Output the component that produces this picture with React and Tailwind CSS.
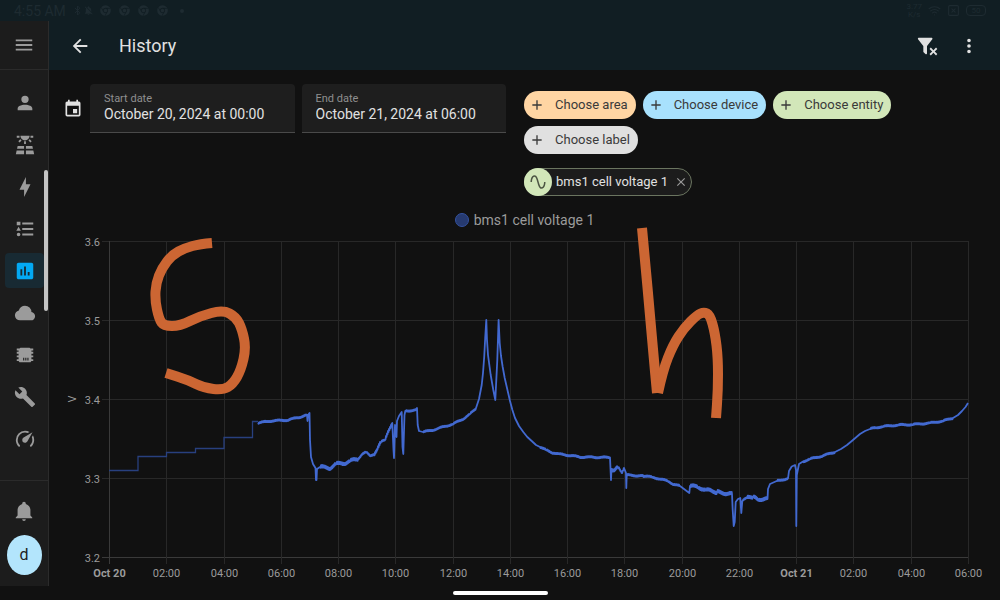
import { Bluetooth, Wifi, SquareX } from "lucide-react";
import { FaChrome } from "react-icons/fa";
import { MdNotificationsOff } from "react-icons/md";

const icons = {
  menu: "M3,6H21V8H3V6M3,11H21V13H3V11M3,16H21V18H3V16Z",
  back: "M20,11V13H8L13.5,18.5L12.08,19.92L4.16,12L12.08,4.08L13.5,5.5L8,11H20Z",
  filterRemove:
    "M14.76,20.83L17.6,18L14.76,15.17L16.17,13.76L19,16.57L21.83,13.76L23.24,15.17L20.43,18L23.24,20.83L21.83,22.24L19,19.4L16.17,22.24L14.76,20.83M12,12V19.88C12.04,20.18 11.94,20.5 11.71,20.71C11.32,21.1 10.69,21.1 10.3,20.71L8.29,18.7C8.06,18.47 7.96,18.16 8,17.87V12H7.97L2.21,4.62C1.87,4.19 1.95,3.56 2.38,3.22C2.57,3.08 2.78,3 3,3H17C17.22,3 17.43,3.08 17.62,3.22C18.05,3.56 18.13,4.19 17.79,4.62L12.03,12H12Z",
  dots: "M12,16A2,2 0 0,1 12,20A2,2 0 0,1 12,16M12,10A2,2 0 0,1 12,14A2,2 0 0,1 12,10M12,4A2,2 0 0,1 12,8A2,2 0 0,1 12,4Z",
  account:
    "M12,4A4,4 0 0,1 16,8A4,4 0 0,1 12,12A4,4 0 0,1 8,8A4,4 0 0,1 12,4M12,14C16.42,14 20,15.79 20,18V20H4V18C4,15.79 7.58,14 12,14Z",
  solar:
    "M3.33 16H11V13H4L3.33 16M13 16H20.67L20 13H13V16M21.11 18H13V22H22L21.11 18M2 22H11V18H2.89L2 22M11 8H13V11H11V8M15.76 7.21L17.18 5.79L19.3 7.91L17.89 9.33L15.76 7.21M4.71 7.91L6.83 5.79L8.24 7.21L6.12 9.33L4.71 7.91M3 2H6V4H3V2M18 2H21V4H18V2M12 7C14.76 7 17 4.76 17 2H7C7 4.76 9.24 7 12 7Z",
  flash: "M11 15H6L13 1V9H18L11 23V15Z",
  logbook:
    "M5,9.5L7.5,14H2.5L5,9.5M3,4H7V8H3V4M5,20A2,2 0 0,0 7,18A2,2 0 0,0 5,16A2,2 0 0,0 3,18A2,2 0 0,0 5,20M9,5V7H21V5H9M9,19H21V17H9V19M9,13H21V11H9V13Z",
  chart:
    "M9 17H7V10H9V17M13 17H11V7H13V17M17 17H15V13H17V17M19 3H5C3.9 3 3 3.9 3 5V19C3 20.1 3.9 21 5 21H19C20.1 21 21 20.1 21 19V5C21 3.9 20.1 3 19 3Z",
  cloud:
    "M6.5 20Q4.22 20 2.61 18.43Q1 16.85 1 14.58Q1 12.63 2.17 11.1Q3.35 9.57 5.25 9.15Q5.88 6.85 7.75 5.43Q9.63 4 12 4Q14.93 4 16.96 6.04Q19 8.07 19 11Q20.73 11.2 21.86 12.5Q23 13.78 23 15.5Q23 17.38 21.69 18.69Q20.38 20 18.5 20Z",
  chip: "M7 4H17L18 5H21V7H19V8.5H21V10.5H19V12.5H21V14.5H19V16.5H21V18.5H19L18 20H6L5 18.5H3V16.5H5V14.5H3V12.5H5V10.5H3V8.5H5V7H3V5H6L7 4M10 15V18H11.2V15H10M12.3 15V18H13.5V15H12.3M14.6 15V18H15.8V15H14.6Z",
  wrench:
    "M22.7,19L13.6,9.9C14.5,7.6 14,4.9 12.1,3C10.1,1 7.1,0.6 4.7,1.7L9,6L6,9L1.6,4.7C0.4,7.1 0.9,10.1 2.9,12.1C4.8,14 7.5,14.5 9.8,13.6L18.9,22.7C19.3,23.1 19.9,23.1 20.3,22.7L22.6,20.4C23.1,20 23.1,19.3 22.7,19Z",
  gauge:
    "M12,16A3,3 0 0,1 9,13C9,11.88 9.61,10.9 10.5,10.39L20.21,4.77L14.68,14.35C14.18,15.33 13.17,16 12,16M12,3C13.81,3 15.5,3.5 16.97,4.32L14.87,5.53C14,5.19 13,5 12,5A8,8 0 0,0 4,13C4,15.21 4.89,17.21 6.34,18.65C6.74,19.04 6.74,19.67 6.35,20.06C5.96,20.45 5.32,20.45 4.93,20.07C3.12,18.26 2,15.76 2,13A10,10 0 0,1 12,3M22,13C22,15.76 20.88,18.26 19.07,20.07C18.68,20.45 18.05,20.45 17.66,20.06C17.27,19.67 17.27,19.04 17.66,18.65C19.11,17.2 20,15.21 20,13C20,12 19.81,11 19.46,10.1L20.67,8C21.5,9.5 22,11.18 22,13Z",
  bell: "M21,19V20H3V19L5,17V11C5,7.9 7.03,5.17 10,4.29C10,4.19 10,4.1 10,4A2,2 0 0,1 12,2A2,2 0 0,1 14,4C14,4.1 14,4.19 14,4.29C16.97,5.17 19,7.9 19,11V17L21,19M14,21A2,2 0 0,1 12,23A2,2 0 0,1 10,21",
  calendar:
    "M19,19H5V8H19M16,1V3H8V1H6V3H5C3.89,3 3,3.89 3,5V19A2,2 0 0,0 5,21H19A2,2 0 0,0 21,19V5C21,3.89 20.1,3 19,3H18V1M17,12H12V17H17V12Z",
  plus: "M19,13H13V19H11V13H5V11H11V5H13V11H19V13Z",
  close:
    "M19,6.41L17.59,5L12,10.59L6.41,5L5,6.41L10.59,12L5,17.59L6.41,19L12,13.41L17.59,19L19,17.59L13.41,12L19,6.41Z",
  sine: "M16.5,21C13.5,21 12.31,16.76 11.05,12.28C10.14,9.04 9,5 7.5,5C4.11,5 4,11.93 4,12H2C2,11.63 2.06,3 7.5,3C10.5,3 11.71,7.25 12.97,11.74C13.83,14.8 15,19 16.5,19C19.94,19 20.03,12.07 20.03,12H22.03C22.03,12.37 21.97,21 16.5,21Z",
};

const Icon = ({ name, size = 22 }) => (
  <svg
    width={size}
    height={size}
    viewBox="0 0 24 24"
    fill="currentColor"
    fillRule="evenodd"
    className="shrink-0"
    aria-hidden="true"
  >
    <path d={icons[name]} />
  </svg>
);

const navItems = [
  { icon: "account", label: "Overview" },
  { icon: "solar", label: "Solar" },
  { icon: "flash", label: "Energy" },
  { icon: "logbook", label: "Logbook" },
  { icon: "chart", label: "History", active: true },
  { icon: "cloud", label: "Cloud" },
  { icon: "chip", label: "ESPHome" },
  { icon: "wrench", label: "Developer tools" },
  { icon: "gauge", label: "Speed" },
];

const StatusBar = () => (
  <div className="flex h-[21px] items-center justify-between bg-[#111e23] pl-3.5 pr-3.5 text-[#1e2b31]">
    <div className="flex items-center gap-1.5">
      <span className="text-sm leading-5">4:55 AM</span>
      <div className="flex items-center">
        <Bluetooth size={11} />
        <MdNotificationsOff size={11} />
      </div>
      <div className="flex items-center gap-2">
        <FaChrome size={11} />
        <FaChrome size={11} />
        <FaChrome size={11} />
        <FaChrome size={11} />
        <span className="ml-1 size-1 rounded-full bg-current" />
      </div>
    </div>
    <div className="flex items-center gap-1.5">
      <div className="text-center text-[8px] leading-[8px]">
        3.77
        <br />
        K/s
      </div>
      <Wifi size={13} />
      <SquareX size={13} />
      <span className="flex h-[11px] w-5 items-center justify-center rounded-sm border border-current text-[8px] leading-[8px]">
        50
      </span>
    </div>
  </div>
);

const Sidebar = () => (
  <aside className="relative flex w-[49px] shrink-0 flex-col border-r border-[#2b2b2b] bg-[#1c1c1c] text-[#9b9b9b]">
    <button
      aria-label="Menu"
      className="flex h-[49px] items-center justify-center border-b border-[#2b2b2b]"
    >
      <Icon name="menu" />
    </button>
    <nav className="flex flex-col gap-[7px] pt-[15px] pl-[5px] pr-1">
      {navItems.map((item) => (
        <a
          key={item.icon}
          href="#"
          aria-label={item.label}
          className={`flex h-[35px] items-center justify-center rounded ${
            item.active ? "bg-[#182a33] text-[#03a9f4]" : ""
          }`}
        >
          <Icon name={item.icon} />
        </a>
      ))}
    </nav>
    <div className="mt-auto flex flex-col items-center border-t border-[#2b2b2b] pt-3 pb-[11px]">
      <button
        aria-label="Notifications"
        className="flex h-[35px] items-center justify-center"
      >
        <Icon name="bell" />
      </button>
      <a
        href="#"
        className="mt-[7px] flex h-10 w-[35px] items-center justify-center rounded-[50%] bg-[#b3e5fc] text-base text-[#212121]"
      >
        d
      </a>
    </div>
    {/* scroll thumb */}
    <div className="absolute top-[149px] right-0 h-[141px] w-1 rounded-full bg-[#c4c4c4]" />
  </aside>
);

const DateField = ({ id, label, value }) => (
  <div className="flex h-[49px] min-w-0 flex-1 flex-col rounded-t border-b border-[#4a4a4a] bg-[#1e1e1e] px-3.5 pt-2">
    <label htmlFor={id} className="text-[11px] leading-[14px] text-[#8f8f8f]">
      {label}
    </label>
    <input
      id={id}
      type="text"
      defaultValue={value}
      className="w-full bg-transparent text-sm leading-4 text-[#e1e1e1] outline-none"
    />
  </div>
);

const Chip = ({ color, children }) => (
  <button
    className={`flex h-7 items-center gap-2.5 rounded-full pr-2 pl-[5px] text-[13px] text-[#3a3a3a] ${color}`}
  >
    <Icon name="plus" size={16} />
    {children}
  </button>
);

// [x, y, noise] along the recorded part of the series
const points = [
  [258, 423, 1], [270, 421, 1], [288, 420, 1], [300, 417, 1], [307, 415, 0],
  [307.5, 421, 0], [308, 415, 0], [309.5, 413, 0], [310, 440, 0], [311, 457, 0],
  [313, 464, 0], [315.5, 468, 0], [316, 480, 0], [316.5, 480, 0], [317, 469, 0],
  [320, 467, 2], [330, 468, 2], [336, 464, 2], [345, 463, 2], [350, 461, 2],
  [358, 459, 1], [362, 454, 1], [366, 452, 1], [370, 456, 1], [374, 454, 2],
  [377, 449, 2], [381, 442, 1], [385, 440, 2], [388, 431, 2], [391, 425, 0],
  [392.3, 423, 0], [393.5, 450, 0], [394, 458, 0], [395, 425, 0], [396.5, 437, 0],
  [397, 421, 0], [399, 416, 0], [401.7, 412, 0], [402.5, 447, 0], [403.3, 454, 0],
  [404.5, 415, 0], [405.3, 411, 1], [416, 410, 0], [417, 408, 0], [417.7, 425, 0],
  [419, 431, 0], [423, 432, 1], [433, 430, 1], [453, 424, 1], [463, 419, 1],
  [470, 414, 1], [475.7, 409, 0], [479, 399, 0], [481.7, 385, 0], [483, 373, 0],
  [484.2, 357, 0], [485.2, 338, 0],
  [486.3, 320, 0], [487, 340, 0], [488, 355, 0], [490.7, 375, 0], [493.3, 390, 0],
  [495.3, 400, 0], [497.3, 360, 0], [498.6, 320, 0], [499.7, 343, 0],
  [501, 356, 0], [502.7, 367, 0], [504.7, 378, 0], [507, 388, 0],
  [510, 401, 0], [512.4, 410, 0], [515, 418, 0], [519, 426, 0], [523.3, 432, 0],
  [527.3, 437, 0], [531.7, 441, 0], [536, 445, 0], [540, 447, 1], [546, 450, 1],
  [552, 452.5, 1], [559, 454, 1], [567, 455, 1], [580, 457, 1], [610, 457.5, 0],
  [611, 480, 0], [611.5, 469, 2], [614, 470, 2], [618, 467, 1], [621.7, 473, 1],
  [624, 468, 0], [626, 473, 0], [626.3, 488, 0], [626.7, 475, 1], [643, 476, 1],
  [652, 477, 1], [660, 479, 1], [668, 481, 1], [673, 484, 1], [680, 486, 0],
  [689.3, 493, 0], [690, 486, 2], [698, 487, 2], [706, 490, 2], [716.7, 492, 2],
  [732, 494, 0], [732.7, 510, 0], [733.7, 526, 0], [734.7, 522, 0],
  [735.7, 502, 0], [738, 499, 0], [740.3, 498, 0], [741.3, 513, 0], [742.3, 501, 1],
  [746.7, 498, 2], [753, 497, 2], [758, 499, 2], [767.5, 499, 0], [768, 489, 0],
  [770, 484, 0], [776.7, 481, 1], [788, 478.5, 0], [789, 471, 0], [791.7, 466.5, 0],
  [795, 465, 0], [796, 470, 0], [796.3, 526, 0], [796.8, 475, 0], [799, 464, 0],
  [803, 461.5, 1], [810, 459, 1], [822, 456, 1], [835, 452, 0], [841, 449, 0],
  [847, 445, 0], [853, 440, 0], [860, 434, 0], [865, 431, 0], [870, 429, 1],
  [876, 427.5, 1], [883, 426.5, 1], [898, 425, 1], [913, 424.5, 1], [930, 423, 1],
  [943, 421, 1], [953, 418, 0], [958, 415, 0], [962, 411, 0], [965.5, 407, 0],
  [968, 403, 0],
];

const jitter = (i) => Math.sin(i * 12.9898) * 0.5;

const linePath = points
  .map(([x, y, noise], i) => {
    const next = points[i + 1];
    let d = `${i === 0 ? "M" : "L"}${x} ${y}`;
    if (next && noise) {
      let side = 1;
      for (let px = x + 0.5; px < next[0]; px += 0.5) {
        const t = (px - x) / (next[0] - x);
        const py = y + (next[1] - y) * t + (side * 0.6 + jitter(px)) * noise;
        d += `L${px.toFixed(1)} ${py.toFixed(1)}`;
        side = -side;
      }
    }
    return d;
  })
  .join("");

// rounds the corners of a freehand stroke through the midpoints of its segments
const freehand = (pts) => {
  let d = `M${pts[0][0]} ${pts[0][1]}`;
  for (let i = 1; i < pts.length - 1; i++) {
    const mx = (pts[i][0] + pts[i + 1][0]) / 2;
    const my = (pts[i][1] + pts[i + 1][1]) / 2;
    d += `Q${pts[i][0]} ${pts[i][1]} ${mx} ${my}`;
  }
  const last = pts[pts.length - 1];
  return `${d}L${last[0]} ${last[1]}`;
};

const strokes = [
  [
    [212, 243], [200, 244], [185, 248], [172, 255], [162, 268], [156, 283],
    [155, 300], [159, 319], [164, 326], [180, 326], [200, 316], [223, 310],
    [236, 317], [242, 329], [246, 348], [241, 370], [233, 384], [223, 390],
    [204, 388], [188, 380], [166, 373],
  ],
  [[642, 228], [645, 260], [650, 315], [653, 350], [657, 393]],
  [
    [658, 393], [663, 370], [673, 345], [684, 328], [697, 315], [704, 312],
    [710, 315], [715, 333], [718, 358], [718, 390], [716, 418],
  ],
];

const xLabels = [
  "Oct 20", "02:00", "04:00", "06:00", "08:00", "10:00", "12:00", "14:00",
  "16:00", "18:00", "20:00", "22:00", "Oct 21", "02:00", "04:00", "06:00",
];
const yLabels = ["3.6", "3.5", "3.4", "3.3", "3.2"];
const xAt = (i) => Math.round(109 + (i * 859) / 15) + 0.5;
const yAt = (i) => 241.5 + i * 79;

const HistoryChart = () => (
  <svg
    viewBox="49 232 951 354"
    className="block h-auto w-full overflow-visible"
    role="img"
    aria-label="bms1 cell voltage 1"
  >
    <g stroke="#282828" strokeWidth="1">
      {yLabels.map((label, i) => (
        <line
          key={label}
          x1="102"
          x2="968"
          y1={yAt(i)}
          y2={yAt(i)}
          stroke={i === 4 ? "#3a3a3a" : undefined}
        />
      ))}
      {xLabels.map((label, i) => (
        <line
          key={i}
          x1={xAt(i)}
          x2={xAt(i)}
          y1="241"
          y2="564"
          stroke={i === 0 ? "#3a3a3a" : undefined}
        />
      ))}
    </g>
    <g fill="#9b9b9b" fontSize="11">
      {yLabels.map((label, i) => (
        <text key={label} x="100" y={yAt(i) + 4} textAnchor="end">
          {label}
        </text>
      ))}
      {xLabels.map((label, i) => (
        <text
          key={i}
          x={xAt(i)}
          y="577"
          textAnchor="middle"
          fontWeight={label.startsWith("Oct") ? 700 : 400}
        >
          {label}
        </text>
      ))}
      <text transform="translate(76 399) rotate(-90)" textAnchor="middle">
        V
      </text>
    </g>
    <path
      d="M109 470.5H138V456.5H166.5V452.5H195.5V448.5H224V437.5H252.5V421.5H258"
      fill="none"
      stroke="#28407f"
      strokeWidth="1.3"
    />
    <path
      d={linePath}
      fill="none"
      stroke="#4269d0"
      strokeWidth="1.8"
      strokeLinejoin="round"
    />
    {/* hand-drawn marks */}
    <g fill="none" stroke="#cc6633" strokeWidth="10" strokeLinejoin="round">
      {strokes.map((pts, i) => (
        <path key={i} d={freehand(pts)} />
      ))}
    </g>
  </svg>
);

export default function App() {
  return (
    <div className="flex min-h-screen flex-col bg-[#111111] font-[Roboto,sans-serif] text-[#e1e1e1]">
      <StatusBar />
      <div className="flex flex-1">
        <Sidebar />
        <main className="min-w-0 flex-1">
          <header className="flex h-[49px] items-center bg-[#111e23] pr-5 pl-5">
            <button aria-label="Back">
              <Icon name="back" />
            </button>
            <h1 className="ml-7 flex-1 text-lg">History</h1>
            <button aria-label="Remove all filters">
              <Icon name="filterRemove" />
            </button>
            <button aria-label="More options" className="ml-5">
              <Icon name="dots" />
            </button>
          </header>

          <div className="flex gap-[18px] pr-3.5 pl-3.5">
            <div className="flex w-[48%] items-start gap-[7px] pt-3.5">
              <div className="flex h-[49px] items-center">
                <Icon name="calendar" size={20} />
              </div>
              <DateField
                id="start"
                label="Start date"
                value="October 20, 2024 at 00:00"
              />
              <DateField
                id="end"
                label="End date"
                value="October 21, 2024 at 06:00"
              />
            </div>
            <div className="flex-1 pt-[21px]">
              <div className="flex flex-wrap gap-[7px]">
                <Chip color="bg-[#ffd5a3]">Choose area</Chip>
                <Chip color="bg-[#a8e1fd]">Choose device</Chip>
                <Chip color="bg-[#d2e7b9]">Choose entity</Chip>
                <Chip color="bg-[#e0e0e0]">Choose label</Chip>
              </div>
              <div className="mt-3.5 flex h-7 w-fit items-center rounded-full border border-[#6b7560] bg-[#1c1c1c] pr-[3px] text-[13px]">
                <span className="-ml-px flex size-7 items-center justify-center rounded-full bg-[#d2e7b9] text-[#4c5543]">
                  <Icon name="sine" size={18} />
                </span>
                <span className="mr-1.5 ml-1">bms1 cell voltage 1</span>
                <button aria-label="Remove" className="text-[#9b9b9b]">
                  <Icon name="close" size={14} />
                </button>
              </div>
            </div>
          </div>

          <div className="flex h-9 items-center justify-center gap-[5px] pt-3 text-sm text-[#9b9b9b]">
            <span className="size-3.5 rounded-full border border-[#34529f] bg-[#263a70]" />
            bms1 cell voltage 1
          </div>
          <HistoryChart />
        </main>
      </div>
      <div className="flex h-3.5 items-center justify-center">
        <div className="h-1 w-[95px] rounded-full bg-white" />
      </div>
    </div>
  );
}
